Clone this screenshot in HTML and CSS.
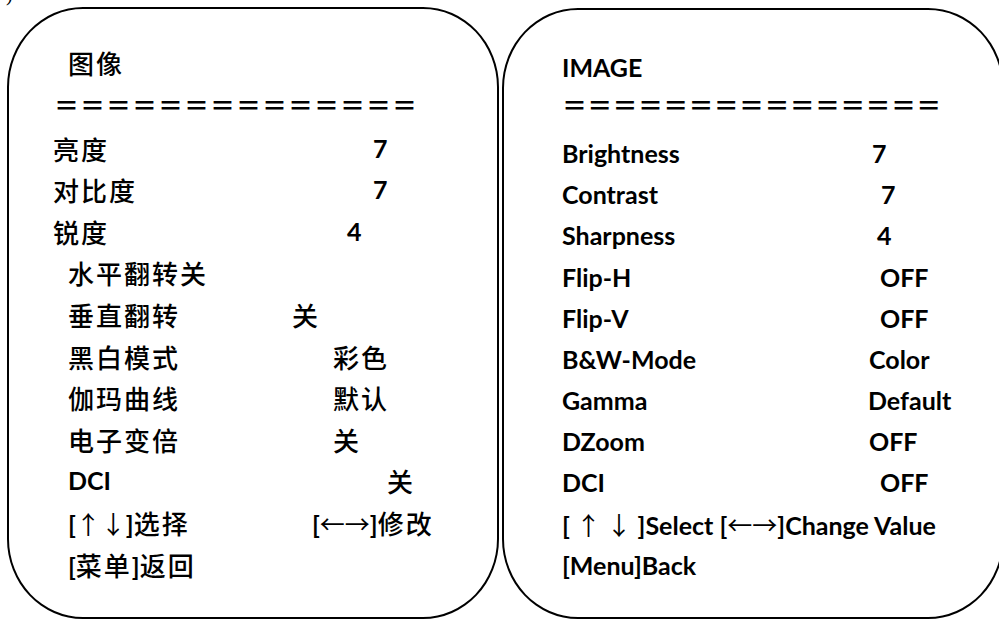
FILE: index.html
```html
<!DOCTYPE html>
<html lang="zh-CN">

<head>
    <meta charset="UTF-8">
    <meta name="viewport" content="width=device-width, initial-scale=1.0">
    <title>图像 / IMAGE</title>
    <link rel="stylesheet" href="styles.css">
</head>

<body>

    <div class="scrap"><span>)</span></div>

    <div class="page">

        <!-- Chinese menu -->
        <div class="panel panel-zh">
            <div class="row title indent"><span class="label zh">图像</span></div>
            <div class="row rule"><span class="label">＝＝＝＝＝＝＝＝＝＝＝＝＝＝</span></div>
            <div class="row tab-320"><span class="label zh">亮度</span><span class="value">7</span></div>
            <div class="row tab-320"><span class="label zh">对比度</span><span class="value">7</span></div>
            <div class="row tab-294"><span class="label zh">锐度</span><span class="value">4</span></div>
            <div class="row indent"><span class="label zh">水平翻转关</span></div>
            <div class="row indent tab-239"><span class="label zh">垂直翻转</span><span class="value zh">关</span></div>
            <div class="row indent tab-280"><span class="label zh">黑白模式</span><span class="value zh">彩色</span></div>
            <div class="row indent tab-280"><span class="label zh">伽玛曲线</span><span class="value zh">默认</span></div>
            <div class="row indent tab-280"><span class="label zh">电子变倍</span><span class="value zh">关</span></div>
            <div class="row indent tab-334"><span class="label">DCI</span><span class="value zh">关</span></div>
            <div class="row indent tab-259">
                <span class="label">[<span class="arrow">↑↓</span>]<span class="zh">选择</span></span>
                <span class="value">[<span class="arrow">←→</span>]<span class="zh">修改</span></span>
            </div>
            <div class="row indent"><span class="label">[<span class="zh">菜单</span>]<span class="zh">返回</span></span></div>
        </div>

        <!-- English menu -->
        <div class="panel panel-en">
            <div class="row title"><span class="label">IMAGE</span></div>
            <div class="row rule"><span class="label">＝＝＝＝＝＝＝＝＝＝＝＝＝＝＝</span></div>
            <div class="row tab-310"><span class="label">Brightness</span><span class="value">7</span></div>
            <div class="row tab-319"><span class="label">Contrast</span><span class="value">7</span></div>
            <div class="row tab-315"><span class="label">Sharpness</span><span class="value">4</span></div>
            <div class="row tab-318"><span class="label">Flip-H</span><span class="value">OFF</span></div>
            <div class="row tab-318"><span class="label">Flip-V</span><span class="value">OFF</span></div>
            <div class="row tab-307"><span class="label">B&amp;W-Mode</span><span class="value">Color</span></div>
            <div class="row tab-306"><span class="label">Gamma</span><span class="value">Default</span></div>
            <div class="row tab-307"><span class="label">DZoom</span><span class="value">OFF</span></div>
            <div class="row tab-318"><span class="label">DCI</span><span class="value">OFF</span></div>
            <div class="row"><span class="label">[ <span class="arrow">↑ ↓</span> ]Select [<span class="arrow">←→</span>]Change Value</span></div>
            <div class="row"><span class="label">[Menu]Back</span></div>
        </div>

    </div>

</body>

</html>
```

FILE: styles.css
```css
* {
    box-sizing: border-box;
}

body {
    margin: 0;
    width: 999px;
    height: 621px;
    overflow: hidden;
    background-color: #fff;
    color: #000;
    font-family: Lato, "Noto Sans CJK SC", sans-serif;
    font-weight: 700;
    font-size: 25px;
}

.scrap {
    height: 7px;
    overflow: hidden;
    padding-left: 6px;
    font-family: "Liberation Serif", serif;
    font-weight: 400;
    font-size: 20px;
    line-height: 7px;
}

.scrap span {
    display: inline-block;
    transform: translateY(-9px);
}

.page {
    display: flex;
    gap: 3px;
    padding-left: 7px;
}

.panel {
    flex: none;
    border: 2px solid #000;
    border-radius: 76px / 80px;
    white-space: nowrap;
}

.panel-zh {
    width: 492px;
    height: 612px;
    padding: 33px 0 0 44px;
}

.panel-en {
    width: 502px;
    height: 611px;
    margin-top: 1px;
    padding: 37px 0 0 58px;
}

.row {
    display: grid;
    grid-template-columns: auto;
    align-items: center;
    height: 41.6px;
    line-height: 41.6px;
}

.panel-en .row {
    height: 41.2px;
    line-height: 41.2px;
}

.indent .label {
    padding-left: 15px;
}

.zh {
    font-family: "Noto Sans CJK SC", sans-serif;
    font-weight: 500;
    font-size: 26px;
    letter-spacing: 2px;
}

.arrow {
    font-family: "Noto Sans CJK SC", sans-serif;
    font-weight: 400;
}

.rule {
    font-family: "Noto Sans CJK SC", sans-serif;
    font-weight: 700;
    letter-spacing: 1px;
}

.panel-zh .rule {
    margin-bottom: 2.4px;
}

.panel-zh .rule .label {
    padding-left: 1px;
}

.panel-en .rule {
    letter-spacing: 0.3px;
    margin-top: -4.2px;
    margin-bottom: 7.8px;
}

/* value columns, measured from the start of the row */
.tab-239 { grid-template-columns: 239px auto; }
.tab-259 { grid-template-columns: 259px auto; }
.tab-280 { grid-template-columns: 280px auto; }
.tab-294 { grid-template-columns: 294px auto; }
.tab-306 { grid-template-columns: 306px auto; }
.tab-307 { grid-template-columns: 307px auto; }
.tab-310 { grid-template-columns: 310px auto; }
.tab-315 { grid-template-columns: 315px auto; }
.tab-318 { grid-template-columns: 318px auto; }
.tab-319 { grid-template-columns: 319px auto; }
.tab-320 { grid-template-columns: 320px auto; }
.tab-334 { grid-template-columns: 334px auto; }
```
